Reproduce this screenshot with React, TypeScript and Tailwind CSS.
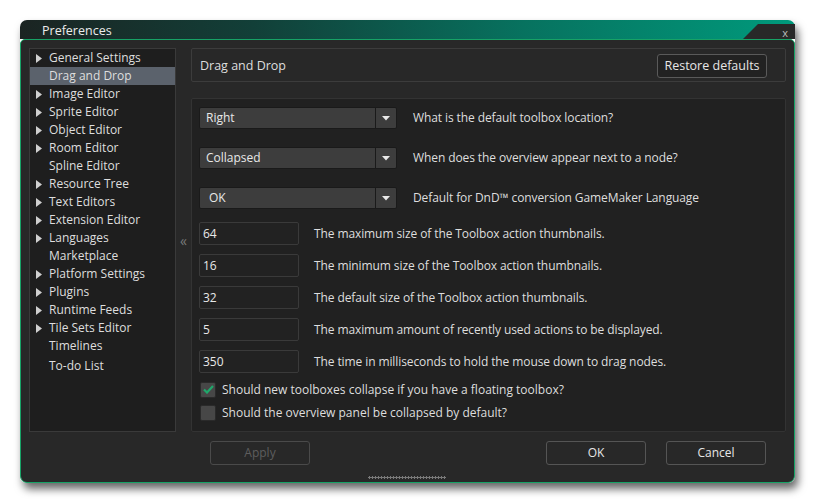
import React from "react";

const treeItems: { label: string; arrow: boolean; selected?: boolean }[] = [
  { label: "General Settings", arrow: true },
  { label: "Drag and Drop", arrow: false, selected: true },
  { label: "Image Editor", arrow: true },
  { label: "Sprite Editor", arrow: true },
  { label: "Object Editor", arrow: true },
  { label: "Room Editor", arrow: true },
  { label: "Spline Editor", arrow: false },
  { label: "Resource Tree", arrow: true },
  { label: "Text Editors", arrow: true },
  { label: "Extension Editor", arrow: true },
  { label: "Languages", arrow: true },
  { label: "Marketplace", arrow: false },
  { label: "Platform Settings", arrow: true },
  { label: "Plugins", arrow: true },
  { label: "Runtime Feeds", arrow: true },
  { label: "Tile Sets Editor", arrow: true },
  { label: "Timelines", arrow: false },
];

const dropdowns = [
  { value: "Right", label: "What is the default toolbox location?" },
  { value: "Collapsed", label: "When does the overview appear next to a node?" },
  { value: "OK", label: "Default for DnD\u2122 conversion GameMaker Language", pad: true },
];

const inputs = [
  { value: "64", label: "The maximum size of the Toolbox action thumbnails." },
  { value: "16", label: "The minimum size of the Toolbox action thumbnails." },
  { value: "32", label: "The default size of the Toolbox action thumbnails." },
  { value: "5", label: "The maximum amount of recently used actions to be displayed." },
  { value: "350", label: "The time in milliseconds to hold the mouse down to drag nodes." },
];

const Arrow = () => (
  <svg width="6" height="9" viewBox="0 0 6 9" className="shrink-0">
    <path d="M0 0 L6 4.5 L0 9 Z" fill="#d0d0d0" />
  </svg>
);

const App: React.FC = () => {
  return (
    <div
      className="w-[815px] h-[502px] bg-white pt-[20px] pl-[20px] text-[12px] text-[#dedede]"
      style={{ fontFamily: '"Open Sans", "Noto Sans", sans-serif' }}
    >
      <div className="w-[775px] h-[463px] flex flex-col rounded-[7px] shadow-[3px_6px_9px_rgba(0,0,0,0.6)]">
        {/* TITLE BAR */}
        <div className="h-[19px] flex items-stretch rounded-t-[7px] bg-[linear-gradient(to_right,#1b2422_0%,#123f38_30%,#07725f_65%,#009a7c_100%)]">
          <div className="pl-[22px] pt-[3px] text-[12.5px] text-[#ececec] leading-[16px]">Preferences</div>
          <div className="flex-1" />
          <div className="self-end w-[52px] h-[15px] bg-[#282828] [clip-path:polygon(15px_0,100%_0,100%_100%,0_100%)] flex items-center justify-end pr-[7px] pt-[2px] text-[11px] text-[#bbbbbb] leading-none">
            x
          </div>
        </div>

        {/* BODY */}
        <div className="flex-1 flex flex-col bg-[#282828] border border-[#17a266] rounded-b-[7px] rounded-t-[5px] px-[8px] pt-[8px]">
          <div className="flex h-[384px]">
            {/* TREE */}
            <div className="w-[147px] bg-[#1e1e1e] border border-[#3a3a3a]">
              {treeItems.map((it) => (
                <div
                  key={it.label}
                  className={`h-[18px] flex items-center ${it.selected ? "bg-[#5b626c]" : ""}`}
                >
                  <div className="w-[19px] flex justify-end pr-[7px]">{it.arrow && <Arrow />}</div>
                  <span className="leading-none">{it.label}</span>
                </div>
              ))}
              <div className="h-[22px] flex items-center pl-[19px]">
                <span className="leading-none">To-do List</span>
              </div>
            </div>

            {/* COLLAPSE */}
            <div className="w-[15px] flex items-center justify-center text-[#7a7a7a] text-[14px] pb-[0px]">
              {"\u00ab"}
            </div>

            {/* RIGHT */}
            <div className="flex-1 flex flex-col">
              <div className="h-[34px] border border-[#3c3c3c] rounded-[2px] flex items-center pl-[8px] pr-[18px]">
                <span className="text-[12.5px] pt-[2px]">Drag and Drop</span>
                <div className="flex-1" />
                <button className="w-[110px] h-[24px] mt-[2px] border border-[#5a5a5a] rounded-[3px] bg-[#222222] text-[12.5px] text-[#e6e6e6]">
                  Restore defaults
                </button>
              </div>

              <div className="mt-[16px] flex-1 bg-[#212121] border border-[#333333] rounded-[2px] pl-[7px] pt-[8px] flex flex-col">
                {dropdowns.map((d) => (
                  <div key={d.value} className="h-[22px] mb-[18px] flex items-center">
                    <div className="w-[198px] h-[22px] flex bg-[#3d3d3d] border border-[#1a1a1a] rounded-[2px]">
                      <div className={`flex-1 flex items-center ${d.pad ? "pl-[9px]" : "pl-[6px]"} text-[#e8e8e8]`}>
                        {d.value}
                      </div>
                      <div className="w-[21px] border-l border-[#1a1a1a] flex items-center justify-center">
                        <svg width="8" height="5" viewBox="0 0 8 5">
                          <path d="M0 0 H8 L4 4.5 Z" fill="#e8e8e8" />
                        </svg>
                      </div>
                    </div>
                    <span className="ml-[16px] tracking-[-0.1px]">{d.label}</span>
                  </div>
                ))}
                <div className="-mt-[5px] flex flex-col gap-[9px]">
                  {inputs.map((i) => (
                    <div key={i.value} className="h-[23px] flex items-center">
                      <div className="w-[100px] h-[23px] bg-[#222222] border border-[#3a3a3a] rounded-[2px] flex items-center pl-[3px] text-[#e8e8e8]">
                        {i.value}
                      </div>
                      <span className="ml-[15px] tracking-[-0.1px]">{i.label}</span>
                    </div>
                  ))}
                </div>
                <div className="mt-[9px] pl-[1px] flex flex-col gap-[8px]">
                  <div className="h-[15px] flex items-center">
                    <div className="w-[16px] h-[16px] bg-[#474747] border border-[#2a2a2a] rounded-[2px] flex items-center justify-center">
                      <svg width="11" height="9" viewBox="0 0 11 9">
                        <path d="M1 4.5 L4 7.5 L10 1" stroke="#1fa86b" strokeWidth="2.2" fill="none" />
                      </svg>
                    </div>
                    <span className="ml-[6px]">Should new toolboxes collapse if you have a floating toolbox?</span>
                  </div>
                  <div className="h-[15px] flex items-center">
                    <div className="w-[16px] h-[16px] bg-[#474747] border border-[#2a2a2a] rounded-[2px]" />
                    <span className="ml-[6px]">Should the overview panel be collapsed by default?</span>
                  </div>
                </div>
              </div>
            </div>
          </div>

          {/* BUTTONS */}
          <div className="mt-[9px] flex h-[24px]">
            <div className="w-[181px]" />
            <button className="w-[100px] h-[24px] border border-[#4a4a4a] rounded-[3px] text-[#5e5e5e]">Apply</button>
            <div className="flex-1" />
            <button className="w-[100px] h-[24px] border border-[#555555] rounded-[3px] text-[#e6e6e6]">OK</button>
            <button className="ml-[20px] mr-[20px] w-[100px] h-[24px] border border-[#555555] rounded-[3px] text-[#e6e6e6]">Cancel</button>
          </div>
          <div className="mt-[11px] flex pl-[339px]">
            <div className="w-[78px] h-[3px] bg-[radial-gradient(#7a7a7a_1px,transparent_1.1px)] bg-[length:3px_3px]" />
          </div>
        </div>
      </div>
    </div>
  );
};

export default App;
